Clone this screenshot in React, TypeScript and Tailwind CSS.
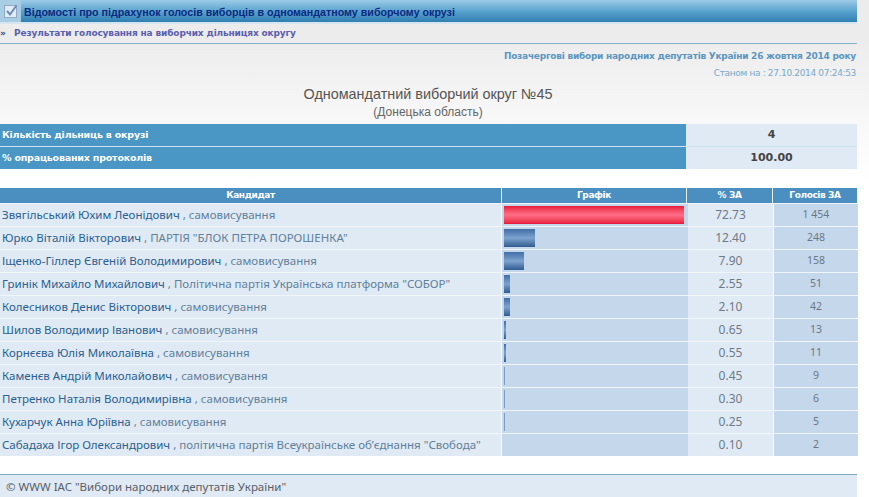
export default function App() {
  const rows: [string, string, string, string, number, string][] = [
    ["Звягільський Юхим Леонідович", "самовисування", "72.73", "1 454", 180, "red"],
    ["Юрко Віталій Вікторович", 'ПАРТІЯ "БЛОК ПЕТРА ПОРОШЕНКА"', "12.40", "248", 31, "blue"],
    ["Іщенко-Гіллер Євгеній Володимирович", "самовисування", "7.90", "158", 20, "blue"],
    ["Гринік Михайло Михайлович", 'Політична партія Українська платформа "СОБОР"', "2.55", "51", 6, "blue"],
    ["Колесников Денис Вікторович", "самовисування", "2.10", "42", 6, "blue"],
    ["Шилов Володимир Іванович", "самовисування", "0.65", "13", 2, "blue"],
    ["Корнєєва Юлія Миколаївна", "самовисування", "0.55", "11", 2, "blue"],
    ["Каменєв Андрій Миколайович", "самовисування", "0.45", "9", 1, "blue"],
    ["Петренко Наталія Володимирівна", "самовисування", "0.30", "6", 1, "blue"],
    ["Кухарчук Анна Юріївна", "самовисування", "0.25", "5", 1, "blue"],
    ["Сабадаха Ігор Олександрович", 'політична партія Всеукраїнське об\u2019єднання "Свобода"', "0.10", "2", 0, "blue"],
  ];
  return (
    <div className="w-[869px] h-[497px] overflow-hidden bg-[linear-gradient(to_bottom,#ececec_0px,#ececec_40px,#f8f8f8_120px,#ffffff_180px)] font-['Liberation_Sans',sans-serif]">
      <div className="w-[857px]">
        <div className="flex h-[24px] bg-gradient-to-b from-[#9ccbe6] via-[#5aa3cf] to-[#2f7fb2] border-b-2 border-[#d5e6f0]">
          <div className="w-[21px] flex items-center justify-center bg-[#a9cde4]">
            <svg width="16" height="16" viewBox="0 0 16 16">
              <rect x="1.5" y="2.5" width="12" height="12" fill="#e3ebf4" stroke="#8fa9c8" />
              <path d="M4 8 L7 11.5 L13.5 2.5" fill="none" stroke="#6a8cb5" strokeWidth="2" />
            </svg>
          </div>
          <div className="pl-[3px] pt-[2px] flex items-center text-[10.7px] font-bold text-[#0b2a80]">
            Відомості про підрахунок голосів виборців в одномандатному виборчому окрузі
          </div>
        </div>
        <div className="h-[20px] flex items-center border-b border-[#7fb0c8] text-[9px] font-bold text-[#5b5fae] font-['DejaVu_Sans',sans-serif] tracking-[-0.15px]">
          <span className="w-[14px] text-[#33478a]">»</span>
          <span>Результати голосування на виборчих дільницях округу</span>
        </div>
        <div className="h-[80px] flex flex-col items-end pr-[1px]">
          <div className="mt-[6px] text-[9px] font-bold text-[#5b96c0] font-['DejaVu_Sans',sans-serif] tracking-[-0.25px]">
            Позачергові вибори народних депутатів України 26 жовтня 2014 року
          </div>
          <div className="mt-[3px] text-[9px] text-[#7aa8c8] font-['DejaVu_Sans',sans-serif] tracking-[-0.35px]">Станом на : 27.10.2014 07:24:53</div>
          <div className="w-full text-center">
            <div className="mt-[5px] text-[14.4px] leading-[18px] text-[#555]">Одномандатний виборчий округ №45</div>
            <div className="mt-[2px] text-[12px] leading-[14px] text-[#666]">(Донецька область)</div>
          </div>
        </div>
        <div className="flex h-[23px] border-b border-[#cde3f0]">
          <div className="w-[686px] bg-[#4a96c4] flex items-center pl-[2px] text-white font-bold text-[9.5px] font-['DejaVu_Sans',sans-serif] tracking-[-0.2px]">Кількість дільниць в окрузі</div>
          <div className="flex-1 bg-[#e0eaf4] flex items-center justify-center text-[#444] font-bold text-[11px] font-['DejaVu_Sans',sans-serif]">4</div>
        </div>
        <div className="flex h-[22px]">
          <div className="w-[686px] bg-[#4a96c4] flex items-center pl-[2px] text-white font-bold text-[9.5px] font-['DejaVu_Sans',sans-serif] tracking-[-0.2px]">% опрацьованих протоколів</div>
          <div className="flex-1 bg-[#e0eaf4] flex items-center justify-center text-[#444] font-bold text-[11px] font-['DejaVu_Sans',sans-serif]">100.00</div>
        </div>
        <div className="mt-[19px] grid grid-cols-[501px_184px_85px_84px] gap-x-[1px] h-[15px] bg-[#e6f0f6] text-white font-bold text-[9px] font-['DejaVu_Sans',sans-serif] tracking-[-0.4px]">
          {["Кандидат", "Графік", "% ЗА", "Голосів ЗА"].map((h) => (
            <div key={h} className="bg-[#4a8fc0] flex items-center justify-center">{h}</div>
          ))}
        </div>
        {rows.map(([name, party, pct, votes, w, color]) => (
          <div key={name} className="grid grid-cols-[501px_185px_85px_84px] gap-x-[1px] h-[23px] border-t border-[#f0f5fa]">
            <div className="bg-[#e0eaf4] pl-[2px] flex items-center text-[11.5px] text-[#2a5f90] whitespace-nowrap font-['Noto_Sans',sans-serif]">
              {name}&nbsp;<span className="text-[#5f7f9a]">, {party}</span>
            </div>
            <div className="bg-[#c5d7ea] flex items-center pl-[2px] mr-[-1px]">
              {w > 0 && (
                <div
                  style={{ width: w }}
                  className={
                    color === "red"
                      ? "h-[18px] bg-gradient-to-b from-[#e8153c] via-[#ff6d88] to-[#e8153c]"
                      : w > 1
                        ? "h-[18px] bg-gradient-to-b from-[#3f6ea6] via-[#7ea3cf] to-[#2f5c90]"
                        : "h-[18px] bg-[#7d9cbf]"
                  }
                />
              )}
            </div>
            <div className="bg-[#e0eaf4] flex items-center justify-center text-[12px] text-[#6f7a88] font-['Noto_Sans',sans-serif]">{pct}</div>
            <div className="bg-[#c5d7ea] flex items-center justify-center text-[10.5px] text-[#6a7785] font-['Noto_Sans',sans-serif]">{votes}</div>
          </div>
        ))}
        <div className="mt-[18px] h-[24px] border-t border-[#7fa9c0] bg-[#e0eaf4] pl-[6px] flex items-center text-[11.5px] text-[#5a6068] font-['Noto_Sans',sans-serif]">
          © WWW IAC "Вибори народних депутатів України"
        </div>
      </div>
    </div>
  );
}
